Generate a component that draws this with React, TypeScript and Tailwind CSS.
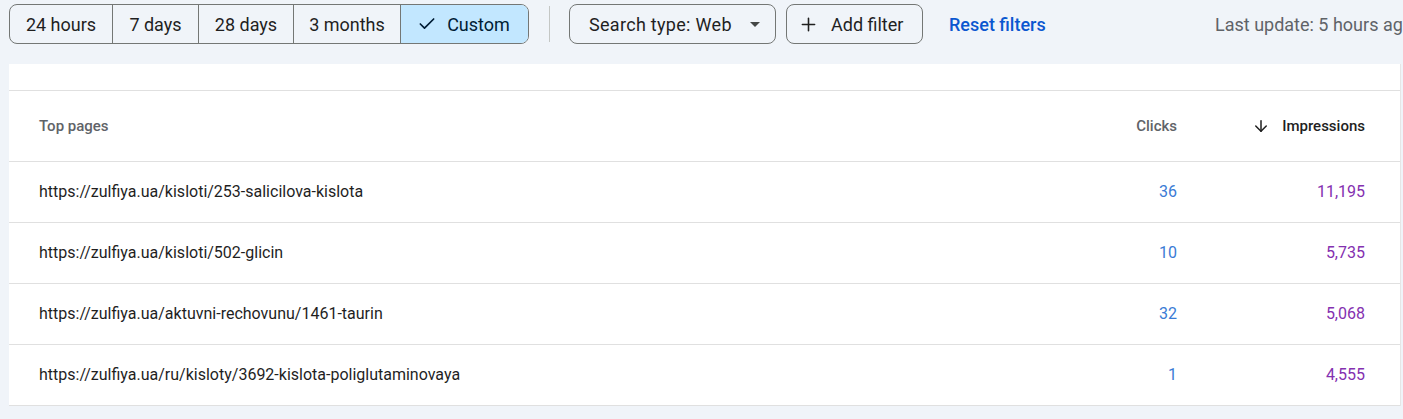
import { Check, Plus, ArrowDown } from "lucide-react";

const RANGES = [
  { label: "24 hours", w: "w-[103px]" },
  { label: "7 days", w: "w-[86px]" },
  { label: "28 days", w: "w-[95px]" },
  { label: "3 months", w: "w-[107px]" },
];

const ROWS = [
  { page: "https://zulfiya.ua/kisloti/253-salicilova-kislota", clicks: "36", impressions: "11,195" },
  { page: "https://zulfiya.ua/kisloti/502-glicin", clicks: "10", impressions: "5,735" },
  { page: "https://zulfiya.ua/aktuvni-rechovunu/1461-taurin", clicks: "32", impressions: "5,068" },
  { page: "https://zulfiya.ua/ru/kisloty/3692-kislota-poliglutaminovaya", clicks: "1", impressions: "4,555" },
];

export default function App() {
  return (
    <div className="h-[419px] w-[1403px] overflow-hidden bg-[#f0f4f9] font-['Roboto',sans-serif] text-[#1f1f1f]">
      {/* filter bar */}
      <div className="flex h-16 items-start overflow-hidden whitespace-nowrap pl-[9px] pt-1">
        <div className="flex h-10 shrink-0 overflow-hidden rounded-lg border border-[#747775] text-[18px] text-[#1f1f1f]">
          {RANGES.map((r) => (
            <div key={r.label} className={`${r.w} flex shrink-0 items-center justify-center border-r border-[#747775]`}>
              {r.label}
            </div>
          ))}
          <div className="flex w-[127px] shrink-0 items-center justify-center gap-[10px] bg-[#c2e7ff] pr-[2px] text-[#001d35]">
            <Check size={20} strokeWidth={2} />
            Custom
          </div>
        </div>

        <div className="ml-5 mt-[2px] h-9 w-px shrink-0 bg-[#c4c7c5]" />

        <div className="ml-[19px] flex h-10 w-[207px] shrink-0 items-center justify-between rounded-lg border border-[#747775] pl-[19px] pr-[15px] text-[18px] tracking-[0.3px]">
          Search type: Web
          <svg width="10" height="5" viewBox="0 0 10 5" className="fill-[#444746]">
            <path d="M0 0h10L5 5z" />
          </svg>
        </div>

        <div className="ml-[10px] flex h-10 w-[137px] shrink-0 items-center gap-[12px] rounded-lg border border-[#747775] pl-[11px] text-[18px]">
          <Plus size={21} strokeWidth={1.8} />
          Add filter
        </div>

        <div className="ml-[26px] flex h-10 w-[98px] shrink-0 items-center text-[18px] font-medium text-[#0b57d0]">Reset filters</div>

        <div className="ml-[168px] flex h-10 shrink-0 items-center text-[18px] text-[#5f6368]">Last update: 5 hours ago</div>
      </div>

      {/* table card */}
      <div className="ml-[9px] w-[1392px] border-r border-[#e6e6e6] bg-white">
        <div className="h-[27px] border-b border-[#e0e0e0]" />
        <div className="flex h-[71px] items-center border-b border-[#e0e0e0] text-[15px] font-medium">
          <div className="flex-1 pl-[30px] text-[#5f6368]">Top pages</div>
          <div className="w-[120px] text-right text-[#5f6368]">Clicks</div>
          <div className="flex w-[188px] items-center justify-end gap-[12px] text-[#1f1f1f]">
            <ArrowDown size={18} strokeWidth={2} />
            Impressions
          </div>
          <div className="w-[35px]" />
        </div>
        {ROWS.map((row) => (
          <div key={row.page} className="flex h-[61px] items-center border-b border-[#e0e0e0] text-[16px]">
            <div className="flex-1 pl-[30px] text-[#1f1f1f]">{row.page}</div>
            <div className="w-[120px] text-right text-[#3a7bd5]">{row.clicks}</div>
            <div className="w-[188px] text-right text-[#8430b0]">{row.impressions}</div>
            <div className="w-[35px]" />
          </div>
        ))}
      </div>
    </div>
  );
}
